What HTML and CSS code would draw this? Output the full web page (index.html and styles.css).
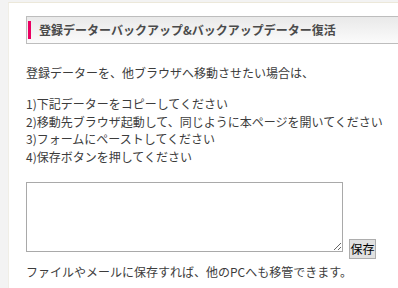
FILE: index.html
```html
<!DOCTYPE html>
<html lang="ja">
<head>
<meta charset="utf-8">
<title>登録データーバックアップ</title>
<link rel="stylesheet" href="styles.css">
</head>
<body>
<div class="panel">
  <h2 class="title"><span class="title-bar"></span>登録データーバックアップ&amp;バックアップデーター復活</h2>
  <p class="intro">登録データーを、他ブラウザへ移動させたい場合は、</p>
  <p class="steps">1)下記データーをコピーしてください<br>2)移動先ブラウザ起動して、同じように本ページを開いてください<br>3)フォームにペーストしてください<br>4)保存ボタンを押してください</p>
  <div class="form-row">
    <textarea class="data-box"></textarea>
    <button class="save-btn" type="button">保存</button>
  </div>
  <p class="note">ファイルやメールに保存すれば、他のPCへも移管できます。</p>
</div>
</body>
</html>
```

FILE: styles.css
```css
html, body {
  margin: 0;
  padding: 0;
}
body {
  background: #f3f3f3;
  overflow: hidden;
  height: 288px;
  font-family: "Noto Sans CJK JP", "Noto Sans", sans-serif;
  font-size: 12px;
  color: #3c3c3c;
}
.panel {
  margin: 2px 0 0 8px;
  height: 286px;
  background: #ffffff;
  border-top: 1px solid #ece8da;
  border-left: 1px solid #f0eee6;
  padding: 13px 0 0 17px;
  box-sizing: border-box;
}
.title {
  margin: 0;
  height: 28px;
  box-sizing: border-box;
  border: 1px solid #bdbdbd;
  border-right: 0;
  background: linear-gradient(#e9e9e9, #fbfbfb);
  display: flex;
  align-items: center;
  font-size: 12px;
  font-weight: bold;
  color: #4a4a4a;
  line-height: 1;
}
.title-bar {
  width: 3px;
  height: 18px;
  margin-left: 1px;
  margin-right: 8px;
  background: #ea0062;
  flex: none;
}
.intro {
  margin: 20px 0 0 0;
  line-height: 17.5px;
}
.steps {
  margin: 13.5px 0 0 0;
  line-height: 17.5px;
}
.form-row {
  display: flex;
  align-items: flex-start;
  margin-top: 16.5px;
}
.data-box {
  width: 317px;
  height: 70px;
  box-sizing: border-box;
  border: 1px solid #a9a9a9;
  margin: 0 6px 0 0;
  padding: 2px;
  font-family: "Noto Sans CJK JP", sans-serif;
  font-size: 12px;
  background: #fff;
  flex: none;
}
.save-btn {
  margin-top: 57px;
  width: 27px;
  height: 20px;
  padding: 0;
  box-sizing: border-box;
  border: 1px solid #adadad;
  border-radius: 0;
  background: #e1e1e1;
  color: #000;
  font-family: "Noto Sans CJK JP", sans-serif;
  font-size: 12px;
  font-weight: normal;
  line-height: 1;
}
.note {
  margin: 4px 0 0 0;
  line-height: 17.5px;
}
```
